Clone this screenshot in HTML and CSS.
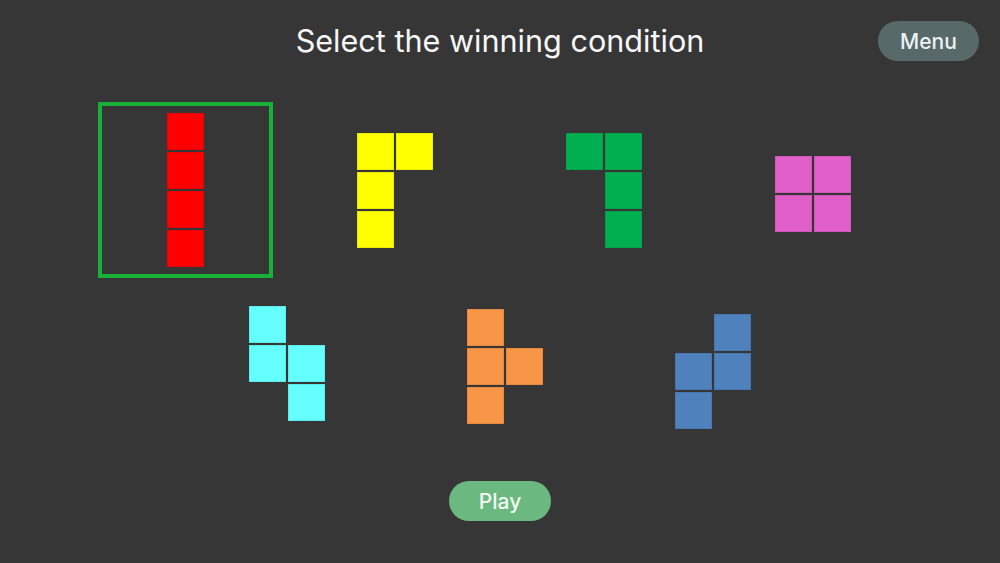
FILE: index.html
```html
<!DOCTYPE html>
<html>
<head>
<meta charset="utf-8">
<link rel="stylesheet" href="styles.css">
</head>
<body>
<div class="screen">
  <header class="top">
    <div></div>
    <h1 class="title">Select the winning condition</h1>
    <button class="menu-btn">Menu</button>
  </header>
  <main class="board">
    <div class="row row-top">
      <div class="slot selected">
        <div class="piece red">
          <i style="grid-area:1/1"></i><i style="grid-area:2/1"></i><i style="grid-area:3/1"></i><i style="grid-area:4/1"></i>
        </div>
      </div>
      <div class="slot">
        <div class="piece yellow">
          <i style="grid-area:1/1"></i><i style="grid-area:1/2"></i><i style="grid-area:2/1"></i><i style="grid-area:3/1"></i>
        </div>
      </div>
      <div class="slot">
        <div class="piece green">
          <i style="grid-area:1/1"></i><i style="grid-area:1/2"></i><i style="grid-area:2/2"></i><i style="grid-area:3/2"></i>
        </div>
      </div>
      <div class="slot">
        <div class="piece pink">
          <i style="grid-area:1/1"></i><i style="grid-area:1/2"></i><i style="grid-area:2/1"></i><i style="grid-area:2/2"></i>
        </div>
      </div>
    </div>
    <div class="row row-bottom">
      <div class="slot">
        <div class="piece cyan">
          <i style="grid-area:1/1"></i><i style="grid-area:2/1"></i><i style="grid-area:2/2"></i><i style="grid-area:3/2"></i>
        </div>
      </div>
      <div class="slot">
        <div class="piece orange">
          <i style="grid-area:1/1"></i><i style="grid-area:2/1"></i><i style="grid-area:2/2"></i><i style="grid-area:3/1"></i>
        </div>
      </div>
      <div class="slot">
        <div class="piece blue">
          <i style="grid-area:1/2"></i><i style="grid-area:2/1"></i><i style="grid-area:2/2"></i><i style="grid-area:3/1"></i>
        </div>
      </div>
    </div>
  </main>
  <footer class="bottom">
    <button class="play-btn">Play</button>
  </footer>
</div>
</body>
</html>
```

FILE: styles.css
```css
html, body {
  margin: 0;
  padding: 0;
}
body {
  background: #363636;
  font-family: Inter, "Noto Sans", "Liberation Sans", sans-serif;
  width: 1000px;
  height: 563px;
  overflow: hidden;
}
.screen {
  display: flex;
  flex-direction: column;
  width: 1000px;
  height: 563px;
}
.top {
  display: grid;
  grid-template-columns: 1fr auto 1fr;
  align-items: center;
  height: 82px;
  padding-right: 21px;
  padding-left: 21px;
}
.title {
  margin: 0 0 2px;
  color: #f7f7f7;
  font-size: 30.6px;
  font-weight: 400;
  text-align: center;
}
.menu-btn {
  justify-self: end;
  width: 101px;
  height: 40px;
  border: none;
  border-radius: 20px;
  background: #58696a;
  color: #eaf2f2;
  font-family: inherit;
  font-size: 21px;
  font-weight: 500;
  padding: 0;
}
.board {
  margin-top: 20px;
  display: flex;
  flex-direction: column;
  align-items: center;
  padding-right: 2px;
}
.row {
  display: flex;
}
.row-top .slot {
  width: 209px;
}
.row-bottom .slot {
  width: 212px;
}
.slot {
  height: 176px;
  display: flex;
  align-items: center;
  justify-content: center;
}
.slot.selected {
  width: 175px;
  margin: 0 17px;
  box-sizing: border-box;
  border: 4px solid #17b13a;
}
.piece {
  display: grid;
  grid-auto-columns: 37px;
  grid-auto-rows: 37px;
  gap: 2px;
}
.piece i {
  display: block;
  width: 37px;
  height: 37px;
  box-shadow: inset 0 0 0 1px rgba(0,0,0,0.08);
}
.red i { background: #ff0000; }
.red { margin-right: 1px; }
.yellow i { background: #ffff00; }
.green i { background: #00b050; }
.pink i { background: #e05fc9; }
.pink { margin-top: 7px; }
.cyan i { background: #66ffff; }
.cyan { margin-bottom: 6px; }
.orange i { background: #f79646; }
.orange { margin-left: 12px; }
.blue i { background: #4f81bd; }
.blue { margin-top: 10px; margin-left: 4px; }
.bottom {
  display: flex;
  justify-content: center;
  margin-top: 27px;
}
.play-btn {
  width: 102px;
  height: 40px;
  border: none;
  border-radius: 20px;
  background: #6bb880;
  color: #f2fbf2;
  font-family: inherit;
  font-size: 21px;
  font-weight: 500;
  padding: 0;
}
```
